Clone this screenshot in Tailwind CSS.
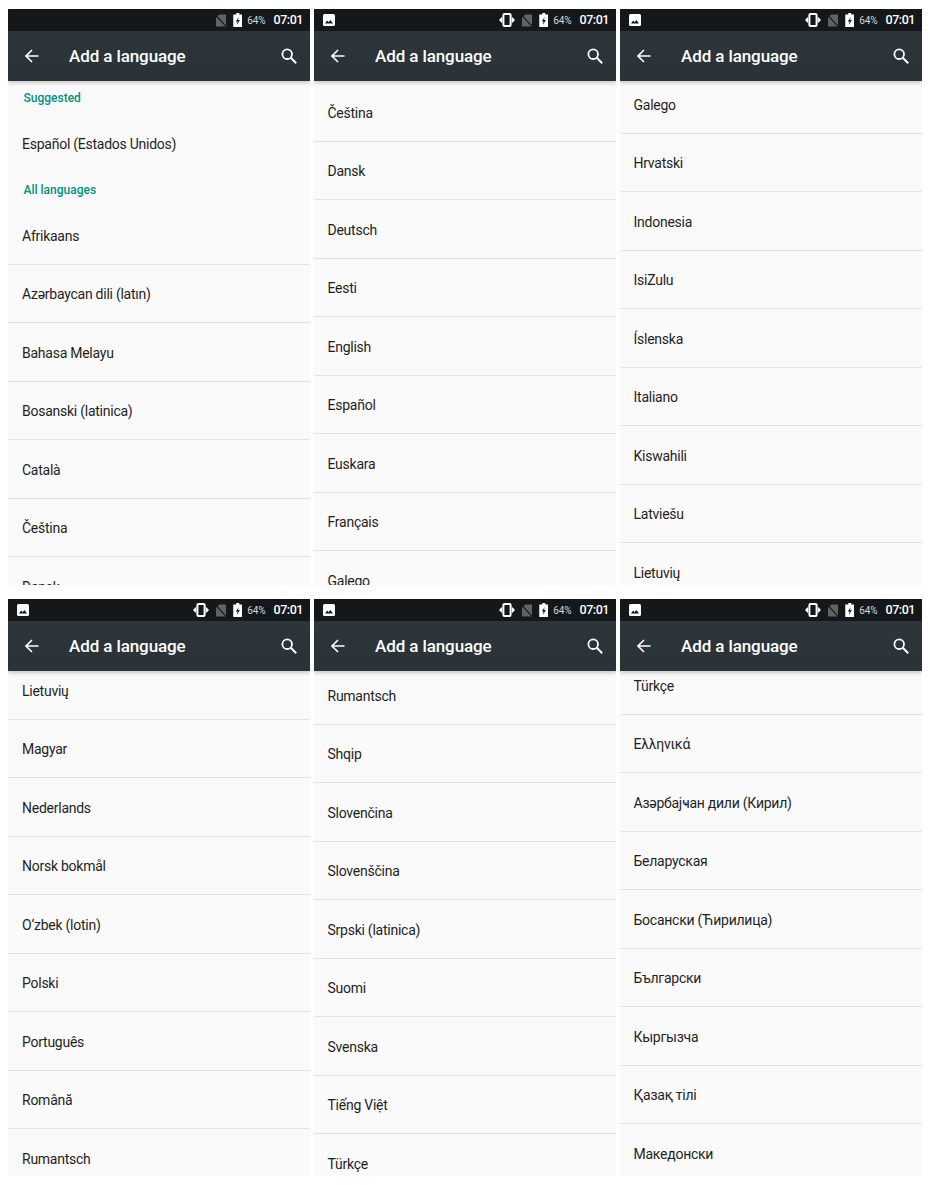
<!DOCTYPE html>
<html>
<head>
<meta charset="UTF-8">
<title>Add a language</title>
<script src="https://cdn.jsdelivr.net/npm/@tailwindcss/browser@4"></script>
</head>
<body class="bg-white font-['Roboto',sans-serif]">

<svg class="hidden">
  <symbol id="ic-pic" viewBox="0 0 12 12"><rect width="12" height="12" rx="1.5" fill="#fff"/><path d="M2 9.5 4.2 6.6 5.6 8.2 7.4 6 10 9.5Z" fill="#15191c"/></symbol>
  <symbol id="ic-vib" viewBox="0 0 16 14"><rect x="4.4" y="1" width="7.2" height="12" rx="1" fill="none" stroke="#fff" stroke-width="2"/><path d="M0 7 2.6 4.2H3.2V9.8H2.6ZM16 7 13.4 4.2H12.8V9.8H13.4Z" fill="#fff"/></symbol>
  <symbol id="ic-sim" viewBox="0 0 11 13"><path d="M3.5 0H11V13H0V3.5Z" fill="#5d6366"/><path d="M0 1 11 13" stroke="#15191c" stroke-width="1.3"/></symbol>
  <symbol id="ic-bat" viewBox="0 0 9 14"><path d="M3 0H6V1.5H9V14H0V1.5H3Z" fill="#fff"/><path d="M5.4 4 2.6 8.6H4.3L3.6 12 6.6 7H4.8Z" fill="#15191c"/></symbol>
  <symbol id="ic-back" viewBox="0 0 14 14"><path d="M13.5 7H1.5M7 1 1 7 7 13" fill="none" stroke="#fff" stroke-width="1.6"/></symbol>
  <symbol id="ic-search" viewBox="0 0 16 16"><circle cx="6.2" cy="6.2" r="4.8" fill="none" stroke="#fff" stroke-width="1.8"/><path d="M9.8 9.8 15.2 15.2" stroke="#fff" stroke-width="2"/></symbol>
</svg>

<div class="grid grid-cols-[302px_302px_302px] grid-rows-[576px_577px] gap-x-[4px] gap-y-[14px] pl-[8px] pt-[9px]">

  <!-- 1 -->
  <section class="flex flex-col overflow-hidden bg-[#fafafa]">
    <div class="relative z-10 shrink-0 shadow-[0_2px_4px_rgba(0,0,0,0.2)]">
      <div class="flex h-[22px] items-center justify-end bg-[#14181b] pl-[9px] pr-[7px]">
        <svg class="mr-[6.5px] h-[13px] w-[10px]"><use href="#ic-sim"/></svg>
        <svg class="mr-[5px] h-[14px] w-[9.5px]"><use href="#ic-bat"/></svg>
        <span class="mr-[8px] text-[10px] tracking-[-0.1px] text-[#d5d7d8]">64%</span>
        <span class="text-[12.5px] font-medium tracking-[-0.45px] text-white">07:01</span>
      </div>
      <div class="flex h-[50px] items-center bg-gradient-to-b from-[#2b353a] to-[#2a3338] pl-[17px] pr-[13px]">
        <svg class="h-[14px] w-[14px]"><use href="#ic-back"/></svg>
        <h1 class="ml-[30px] flex-1 pt-[1px] text-[17px] font-medium tracking-[-0.1px] text-white">Add a language</h1>
        <svg class="h-[16px] w-[16px]"><use href="#ic-search"/></svg>
      </div>
    </div>
    <div class="flex h-[34px] shrink-0 items-center pl-[15.5px] text-[12px] font-medium text-[#00917f]">Suggested</div>
    <div class="flex h-[58px] shrink-0 items-center pl-[14px] text-[14px] tracking-[-0.25px] text-[#1f1f1f]">Español (Estados Unidos)</div>
    <div class="flex h-[33px] shrink-0 items-center pl-[15.5px] text-[12px] font-medium text-[#00917f]">All languages</div>
    <ul class="text-[14px] tracking-[-0.25px] text-[#1f1f1f] [&>li]:flex [&>li]:h-[58.5px] [&>li]:shrink-0 [&>li]:items-center [&>li]:border-b [&>li]:border-[#e2e2e2] [&>li]:pl-[14px] [&>li]:pt-[3px]">
      <li>Afrikaans</li><li>Azərbaycan dili (latın)</li><li>Bahasa Melayu</li><li>Bosanski (latinica)</li><li>Català</li><li>Čeština</li><li>Dansk</li>
    </ul>
  </section>

  <!-- 2 -->
  <section class="flex flex-col overflow-hidden bg-[#fafafa]">
    <div class="relative z-10 shrink-0 shadow-[0_2px_4px_rgba(0,0,0,0.2)]">
      <div class="flex h-[22px] items-center justify-end bg-[#14181b] pl-[9px] pr-[7px]">
        <svg class="mr-auto h-[12px] w-[12px]"><use href="#ic-pic"/></svg>
        <svg class="mr-[7px] h-[14px] w-[16px]"><use href="#ic-vib"/></svg>
        <svg class="mr-[6.5px] h-[13px] w-[10px]"><use href="#ic-sim"/></svg>
        <svg class="mr-[5px] h-[14px] w-[9.5px]"><use href="#ic-bat"/></svg>
        <span class="mr-[8px] text-[10px] tracking-[-0.1px] text-[#d5d7d8]">64%</span>
        <span class="text-[12.5px] font-medium tracking-[-0.45px] text-white">07:01</span>
      </div>
      <div class="flex h-[50px] items-center bg-gradient-to-b from-[#2b353a] to-[#2a3338] pl-[17px] pr-[13px]">
        <svg class="h-[14px] w-[14px]"><use href="#ic-back"/></svg>
        <h1 class="ml-[30px] flex-1 pt-[1px] text-[17px] font-medium tracking-[-0.1px] text-white">Add a language</h1>
        <svg class="h-[16px] w-[16px]"><use href="#ic-search"/></svg>
      </div>
    </div>
    <ul class="mt-[2px] text-[14px] tracking-[-0.25px] text-[#1f1f1f] [&>li]:flex [&>li]:h-[58.5px] [&>li]:shrink-0 [&>li]:items-center [&>li]:border-b [&>li]:border-[#e2e2e2] [&>li]:pl-[13.5px] [&>li]:pt-[3px]">
      <li>Čeština</li><li>Dansk</li><li>Deutsch</li><li>Eesti</li><li>English</li><li>Español</li><li>Euskara</li><li>Français</li><li>Galego</li>
    </ul>
  </section>

  <!-- 3 -->
  <section class="flex flex-col overflow-hidden bg-[#fafafa]">
    <div class="relative z-10 shrink-0 shadow-[0_2px_4px_rgba(0,0,0,0.2)]">
      <div class="flex h-[22px] items-center justify-end bg-[#14181b] pl-[9px] pr-[7px]">
        <svg class="mr-auto h-[12px] w-[12px]"><use href="#ic-pic"/></svg>
        <svg class="mr-[7px] h-[14px] w-[16px]"><use href="#ic-vib"/></svg>
        <svg class="mr-[6.5px] h-[13px] w-[10px]"><use href="#ic-sim"/></svg>
        <svg class="mr-[5px] h-[14px] w-[9.5px]"><use href="#ic-bat"/></svg>
        <span class="mr-[8px] text-[10px] tracking-[-0.1px] text-[#d5d7d8]">64%</span>
        <span class="text-[12.5px] font-medium tracking-[-0.45px] text-white">07:01</span>
      </div>
      <div class="flex h-[50px] items-center bg-gradient-to-b from-[#2b353a] to-[#2a3338] pl-[17px] pr-[13px]">
        <svg class="h-[14px] w-[14px]"><use href="#ic-back"/></svg>
        <h1 class="ml-[30px] flex-1 pt-[1px] text-[17px] font-medium tracking-[-0.1px] text-white">Add a language</h1>
        <svg class="h-[16px] w-[16px]"><use href="#ic-search"/></svg>
      </div>
    </div>
    <ul class="-mt-[6px] text-[14px] tracking-[-0.25px] text-[#1f1f1f] [&>li]:flex [&>li]:h-[58.5px] [&>li]:shrink-0 [&>li]:items-center [&>li]:border-b [&>li]:border-[#e2e2e2] [&>li]:pl-[13.5px] [&>li]:pt-[3px]">
      <li>Galego</li><li>Hrvatski</li><li>Indonesia</li><li>IsiZulu</li><li>Íslenska</li><li>Italiano</li><li>Kiswahili</li><li>Latviešu</li><li>Lietuvių</li>
    </ul>
  </section>

  <!-- 4 -->
  <section class="flex flex-col overflow-hidden bg-[#fafafa]">
    <div class="relative z-10 shrink-0 shadow-[0_2px_4px_rgba(0,0,0,0.2)]">
      <div class="flex h-[22px] items-center justify-end bg-[#14181b] pl-[9px] pr-[7px]">
        <svg class="mr-auto h-[12px] w-[12px]"><use href="#ic-pic"/></svg>
        <svg class="mr-[7px] h-[14px] w-[16px]"><use href="#ic-vib"/></svg>
        <svg class="mr-[6.5px] h-[13px] w-[10px]"><use href="#ic-sim"/></svg>
        <svg class="mr-[5px] h-[14px] w-[9.5px]"><use href="#ic-bat"/></svg>
        <span class="mr-[8px] text-[10px] tracking-[-0.1px] text-[#d5d7d8]">64%</span>
        <span class="text-[12.5px] font-medium tracking-[-0.45px] text-white">07:01</span>
      </div>
      <div class="flex h-[50px] items-center bg-gradient-to-b from-[#2b353a] to-[#2a3338] pl-[17px] pr-[13px]">
        <svg class="h-[14px] w-[14px]"><use href="#ic-back"/></svg>
        <h1 class="ml-[30px] flex-1 pt-[1px] text-[17px] font-medium tracking-[-0.1px] text-white">Add a language</h1>
        <svg class="h-[16px] w-[16px]"><use href="#ic-search"/></svg>
      </div>
    </div>
    <ul class="-mt-[10px] text-[14px] tracking-[-0.25px] text-[#1f1f1f] [&>li]:flex [&>li]:h-[58.5px] [&>li]:shrink-0 [&>li]:items-center [&>li]:border-b [&>li]:border-[#e2e2e2] [&>li]:pl-[14px] [&>li]:pt-[3px]">
      <li>Lietuvių</li><li>Magyar</li><li>Nederlands</li><li>Norsk bokmål</li><li>O‘zbek (lotin)</li><li>Polski</li><li>Português</li><li>Română</li><li>Rumantsch</li>
    </ul>
  </section>

  <!-- 5 -->
  <section class="flex flex-col overflow-hidden bg-[#fafafa]">
    <div class="relative z-10 shrink-0 shadow-[0_2px_4px_rgba(0,0,0,0.2)]">
      <div class="flex h-[22px] items-center justify-end bg-[#14181b] pl-[9px] pr-[7px]">
        <svg class="mr-auto h-[12px] w-[12px]"><use href="#ic-pic"/></svg>
        <svg class="mr-[7px] h-[14px] w-[16px]"><use href="#ic-vib"/></svg>
        <svg class="mr-[6.5px] h-[13px] w-[10px]"><use href="#ic-sim"/></svg>
        <svg class="mr-[5px] h-[14px] w-[9.5px]"><use href="#ic-bat"/></svg>
        <span class="mr-[8px] text-[10px] tracking-[-0.1px] text-[#d5d7d8]">64%</span>
        <span class="text-[12.5px] font-medium tracking-[-0.45px] text-white">07:01</span>
      </div>
      <div class="flex h-[50px] items-center bg-gradient-to-b from-[#2b353a] to-[#2a3338] pl-[17px] pr-[13px]">
        <svg class="h-[14px] w-[14px]"><use href="#ic-back"/></svg>
        <h1 class="ml-[30px] flex-1 pt-[1px] text-[17px] font-medium tracking-[-0.1px] text-white">Add a language</h1>
        <svg class="h-[16px] w-[16px]"><use href="#ic-search"/></svg>
      </div>
    </div>
    <ul class="-mt-[5px] text-[14px] tracking-[-0.25px] text-[#1f1f1f] [&>li]:flex [&>li]:h-[58.5px] [&>li]:shrink-0 [&>li]:items-center [&>li]:border-b [&>li]:border-[#e2e2e2] [&>li]:pl-[13.5px] [&>li]:pt-[3px]">
      <li>Rumantsch</li><li>Shqip</li><li>Slovenčina</li><li>Slovenščina</li><li>Srpski (latinica)</li><li>Suomi</li><li>Svenska</li><li>Tiếng Việt</li><li>Türkçe</li>
    </ul>
  </section>

  <!-- 6 -->
  <section class="flex flex-col overflow-hidden bg-[#fafafa]">
    <div class="relative z-10 shrink-0 shadow-[0_2px_4px_rgba(0,0,0,0.2)]">
      <div class="flex h-[22px] items-center justify-end bg-[#14181b] pl-[9px] pr-[7px]">
        <svg class="mr-auto h-[12px] w-[12px]"><use href="#ic-pic"/></svg>
        <svg class="mr-[7px] h-[14px] w-[16px]"><use href="#ic-vib"/></svg>
        <svg class="mr-[6.5px] h-[13px] w-[10px]"><use href="#ic-sim"/></svg>
        <svg class="mr-[5px] h-[14px] w-[9.5px]"><use href="#ic-bat"/></svg>
        <span class="mr-[8px] text-[10px] tracking-[-0.1px] text-[#d5d7d8]">64%</span>
        <span class="text-[12.5px] font-medium tracking-[-0.45px] text-white">07:01</span>
      </div>
      <div class="flex h-[50px] items-center bg-gradient-to-b from-[#2b353a] to-[#2a3338] pl-[17px] pr-[13px]">
        <svg class="h-[14px] w-[14px]"><use href="#ic-back"/></svg>
        <h1 class="ml-[30px] flex-1 pt-[1px] text-[17px] font-medium tracking-[-0.1px] text-white">Add a language</h1>
        <svg class="h-[16px] w-[16px]"><use href="#ic-search"/></svg>
      </div>
    </div>
    <ul class="-mt-[15px] text-[14px] tracking-[-0.25px] text-[#1f1f1f] [&>li]:flex [&>li]:h-[58.5px] [&>li]:shrink-0 [&>li]:items-center [&>li]:border-b [&>li]:border-[#e2e2e2] [&>li]:pl-[13.5px] [&>li]:pt-[3px]">
      <li>Türkçe</li><li>Ελληνικά</li><li>Азәрбајҹан дили (Кирил)</li><li>Беларуская</li><li>Босански (Ћирилица)</li><li>Български</li><li>Кыргызча</li><li>Қазақ тілі</li><li>Македонски</li>
    </ul>
  </section>

</div>
</body>
</html>
